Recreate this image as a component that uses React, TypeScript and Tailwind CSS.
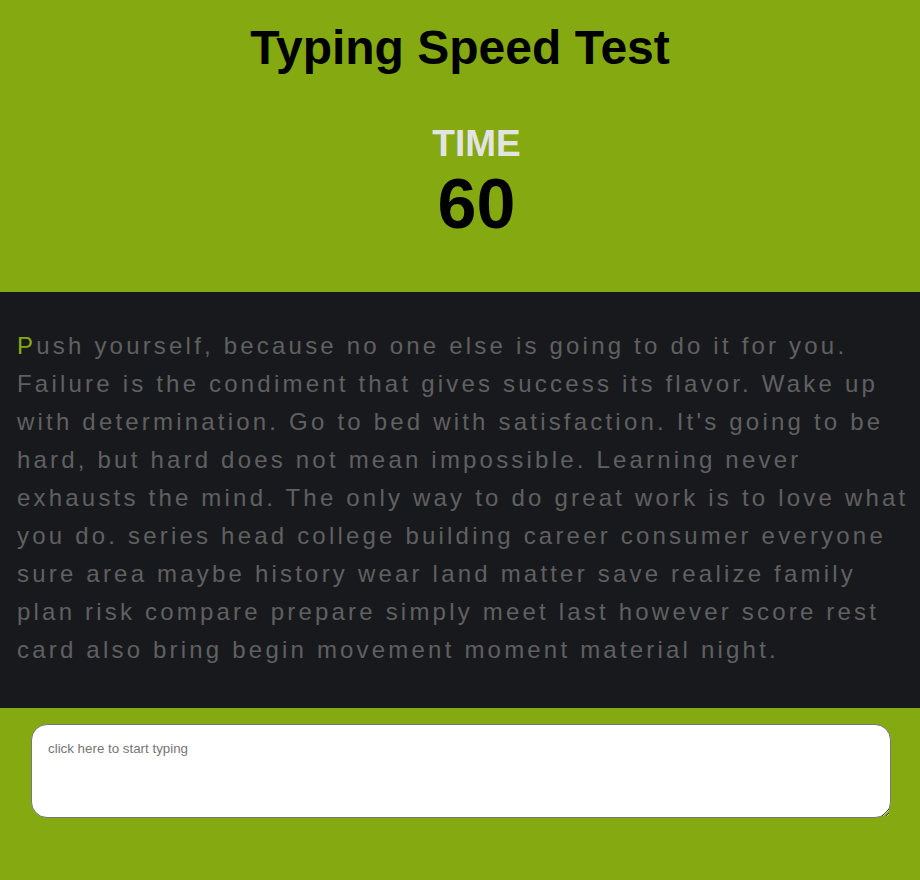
const quote =
  "Push yourself, because no one else is going to do it for you. Failure is the condiment that gives success its flavor. Wake up with determination. Go to bed with satisfaction. It's going to be hard, but hard does not mean impossible. Learning never exhausts the mind. The only way to do great work is to love what you do. series head college building career consumer everyone sure area maybe history wear land matter save realize family plan risk compare prepare simply meet last however score rest card also bring begin movement moment material night.";

export default function App() {
  return (
    <div className="min-h-[880px] bg-[#84a911] font-['Liberation_Sans',Arial,sans-serif]">
      {/* Header */}
      <header className="h-[292px] flex flex-col items-center text-center">
        <h1 className="mt-[21px] text-[48px] font-bold leading-[54px] text-black">
          Typing Speed Test
        </h1>
        <div className="pl-[33px] flex flex-col items-center">
          <div className="mt-[48px] text-[37px] font-bold leading-[42px] text-[#e3e3e3]">TIME</div>
          <div className="text-[70px] font-bold leading-[78px] text-black">60</div>
        </div>
      </header>

      {/* Quote */}
      <section className="bg-[#18191d] pl-[17px] pr-[8px] pt-[35px] pb-[39px]">
        <p className="text-[24px] leading-[38px] tracking-[3.2px] text-[#606060]">
          <span className="text-[#84a911]">{quote[0]}</span>
          {quote.slice(1)}
        </p>
      </section>

      {/* Input */}
      <div className="pl-[31px] pr-[29px] pt-[16px] pb-[62px]">
        <textarea
          autoFocus
          placeholder="click here to start typing"
          className="block w-full h-[94px] rounded-[16px] border border-[#767676] bg-white pl-[16px] pr-[15px] pt-[14px] pb-[15px] text-[13.33px] font-['Liberation_Sans',Arial,sans-serif] text-black placeholder:text-[#757575] outline-none"
        />
      </div>
    </div>
  );
}
